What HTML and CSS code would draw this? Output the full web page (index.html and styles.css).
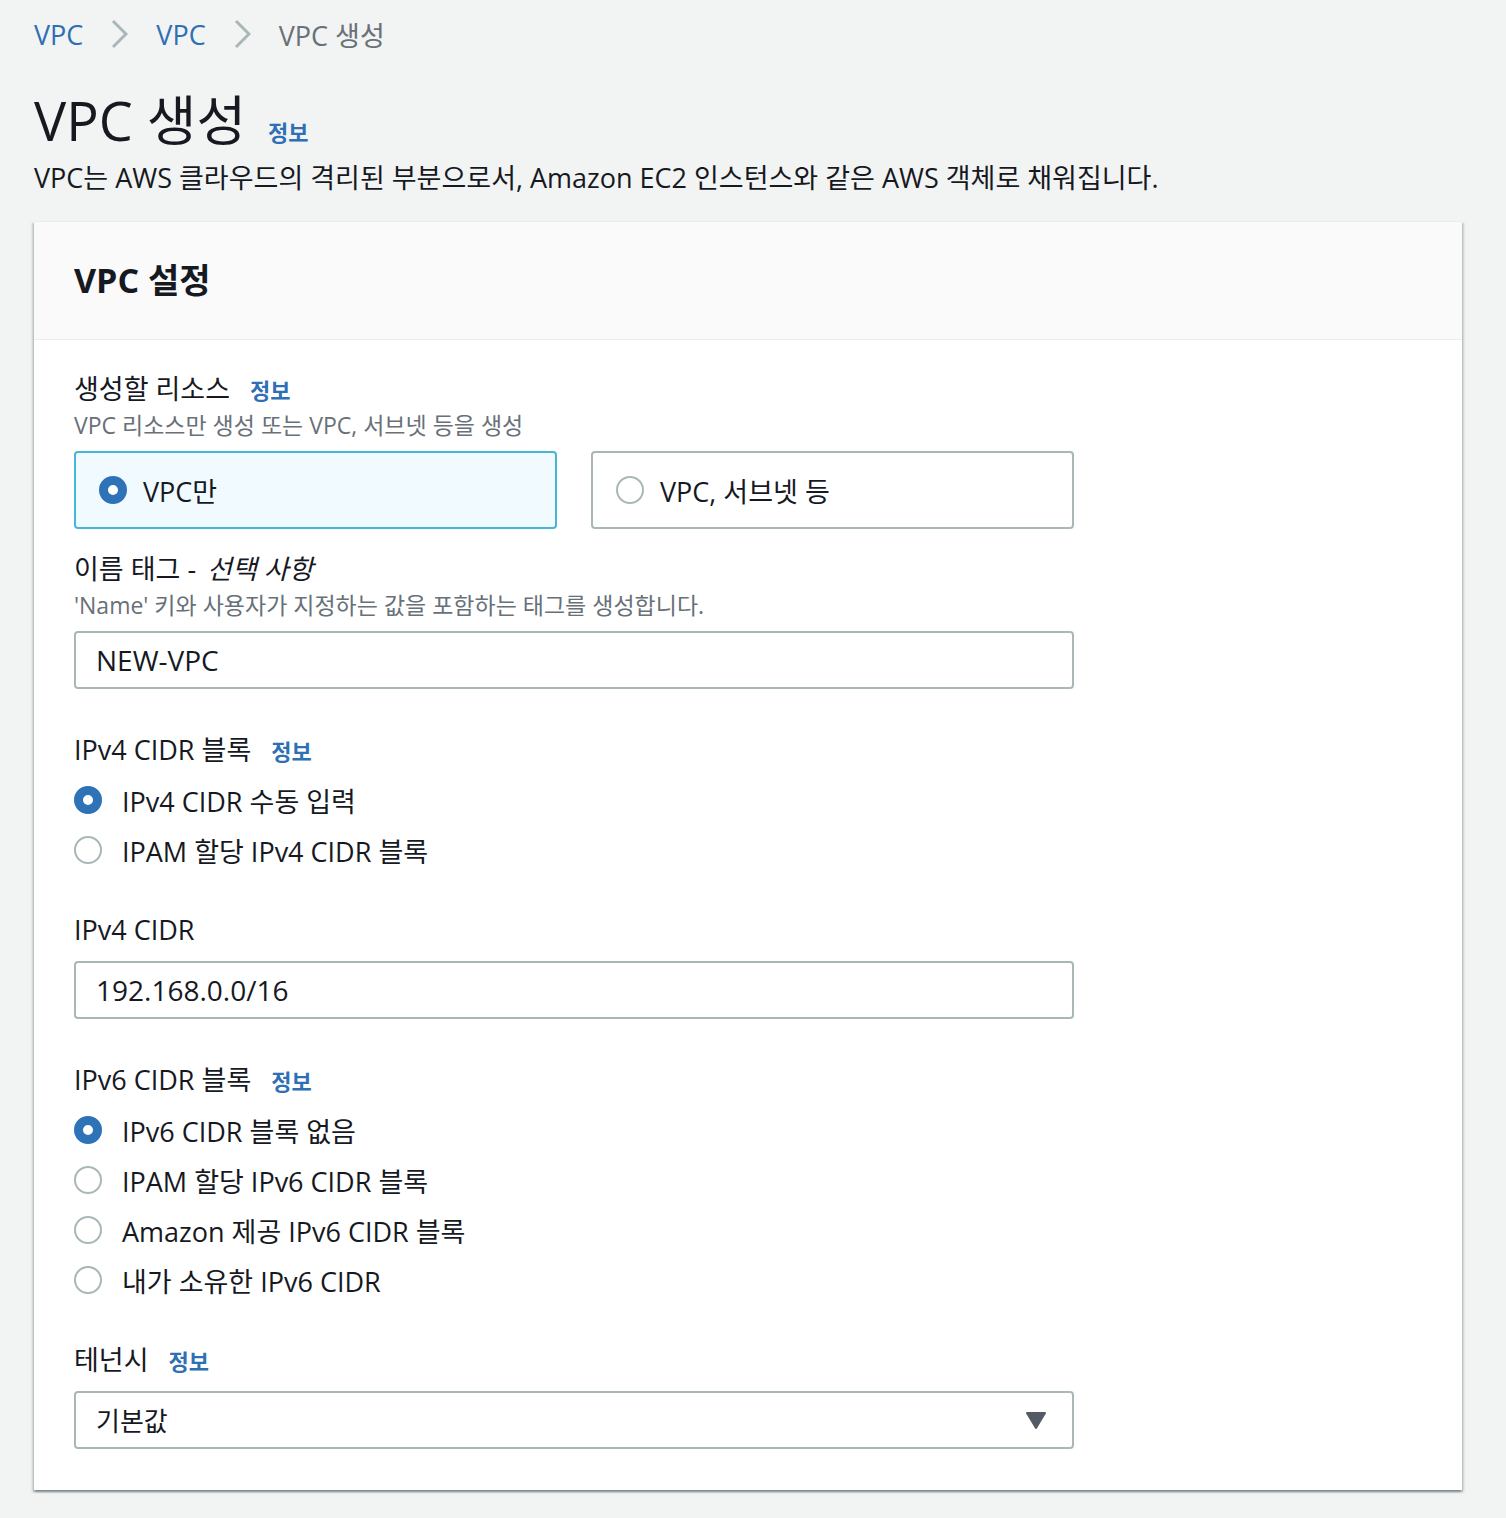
FILE: index.html
```html
<!DOCTYPE html>
<html lang="ko">
<head>
  <meta charset="UTF-8">
  <meta name="viewport" content="width=device-width, initial-scale=1.0">
  <title>VPC 생성</title>
  <link rel="stylesheet" href="styles.css">
</head>
<body>
  <nav class="breadcrumbs">
    <a href="#">VPC</a>
    <span class="crumb-sep"><svg width="17" height="30" viewBox="0 0 17 30"><polyline points="2,2 15,15 2,28" fill="none" stroke="#aab7b8" stroke-width="3"/></svg></span>
    <a href="#">VPC</a>
    <span class="crumb-sep"><svg width="17" height="30" viewBox="0 0 17 30"><polyline points="2,2 15,15 2,28" fill="none" stroke="#aab7b8" stroke-width="3"/></svg></span>
    <span class="crumb-current">VPC 생성</span>
  </nav>

  <h1 class="page-title">VPC 생성 <a class="info-link" href="#">정보</a></h1>
  <p class="page-desc">VPC는 AWS 클라우드의 격리된 부분으로서, Amazon EC2 인스턴스와 같은 AWS 객체로 채워집니다.</p>

  <div class="panel">
    <div class="panel-header">
      <h2>VPC 설정</h2>
    </div>
    <div class="panel-body">

      <div class="field">
        <div class="field-label">생성할 리소스 <a class="info-link" href="#">정보</a></div>
        <div class="field-desc">VPC 리소스만 생성 또는 VPC, 서브넷 등을 생성</div>
        <div class="tiles">
          <div class="tile selected"><span class="radio checked"></span>VPC만</div>
          <div class="tile"><span class="radio"></span>VPC, 서브넷 등</div>
        </div>
      </div>

      <div class="field field-tight">
        <div class="field-label">이름 태그 - <em>선택 사항</em></div>
        <div class="field-desc">'Name' 키와 사용자가 지정하는 값을 포함하는 태그를 생성합니다.</div>
        <div class="input">NEW-VPC</div>
      </div>

      <div class="field">
        <div class="field-label">IPv4 CIDR 블록 <a class="info-link" href="#">정보</a></div>
        <div class="radio-list">
          <div class="radio-row"><span class="radio checked"></span>IPv4 CIDR 수동 입력</div>
          <div class="radio-row"><span class="radio"></span>IPAM 할당 IPv4 CIDR 블록</div>
        </div>
      </div>

      <div class="field field-after-radios">
        <div class="field-label">IPv4 CIDR</div>
        <div class="input input-spaced">192.168.0.0/16</div>
      </div>

      <div class="field">
        <div class="field-label">IPv6 CIDR 블록 <a class="info-link" href="#">정보</a></div>
        <div class="radio-list">
          <div class="radio-row"><span class="radio checked"></span>IPv6 CIDR 블록 없음</div>
          <div class="radio-row"><span class="radio"></span>IPAM 할당 IPv6 CIDR 블록</div>
          <div class="radio-row"><span class="radio"></span>Amazon 제공 IPv6 CIDR 블록</div>
          <div class="radio-row"><span class="radio"></span>내가 소유한 IPv6 CIDR</div>
        </div>
      </div>

      <div class="field field-after-radios">
        <div class="field-label">테넌시 <a class="info-link" href="#">정보</a></div>
        <div class="input input-spaced select">
          <span>기본값</span>
          <svg class="caret" width="20" height="17" viewBox="0 0 20 17"><path d="M1 1 H19 L10 16 Z" fill="#545b64" stroke="#545b64" stroke-width="2" stroke-linejoin="round"/></svg>
        </div>
      </div>

    </div>
  </div>
</body>
</html>
```

FILE: styles.css
```css
* {
  box-sizing: border-box;
}
body {
  margin: 0;
  padding: 0 44px 28px 34px;
  background: #f2f3f3;
  font-family: "Open Sans", "Noto Sans CJK KR", sans-serif;
  color: #16191f;
}
a {
  text-decoration: none;
}

/* breadcrumbs */
.breadcrumbs {
  display: flex;
  align-items: center;
  height: 68px;
  font-size: 27px;
}
.breadcrumbs a {
  color: #2e6fb5;
}
.crumb-sep {
  display: flex;
  margin: 0 28px;
}
.crumb-current {
  color: #687078;
}

/* page heading */
.page-title {
  display: flex;
  align-items: baseline;
  gap: 22px;
  height: 64px;
  margin: 20px 0 0;
  font-size: 54px;
  font-weight: 400;
  line-height: 64px;
}
.info-link {
  font-size: 22px;
  font-weight: 700;
  line-height: 1;
  color: #2e6fb5;
}
.page-desc {
  margin: 8px 0 0;
  font-size: 27px;
  line-height: 36px;
}

/* panel */
.panel {
  margin-top: 25px;
  background: #fff;
  border-top: 1px solid #eaeded;
  box-shadow: 0 2px 2px 0 rgba(0,28,36,0.3), 2px 2px 2px 0 rgba(0,28,36,0.15), -2px 2px 2px 0 rgba(0,28,36,0.15);
}
.panel-header {
  background: #fafafa;
  border-bottom: 1px solid #eaeded;
  padding: 36px 40px 37px;
}
.panel-header h2 {
  margin: 0;
  font-size: 34px;
  font-weight: 700;
  line-height: 44px;
}
.panel-body {
  padding: 31px 40px 41px;
}

/* form fields */
.field {
  margin-top: 43px;
}
.field:first-child {
  margin-top: 0;
}
.field-tight {
  margin-top: 22px;
}
.field-after-radios {
  margin-top: 37px;
}
.field-label {
  display: flex;
  align-items: baseline;
  gap: 20px;
  height: 36px;
  font-size: 27px;
  line-height: 36px;
}
.field-label em {
  margin-left: -9px;
}
.field-desc {
  margin-top: 2px;
  font-size: 23px;
  line-height: 32px;
  color: #687078;
}

/* tiles */
.tiles {
  display: flex;
  gap: 34px;
  width: 1000px;
  margin-top: 10px;
}
.tile {
  flex: 1;
  display: flex;
  align-items: center;
  gap: 16px;
  height: 78px;
  padding-left: 23px;
  border: 2px solid #aab7b8;
  border-radius: 4px;
  font-size: 27px;
}
.tile.selected {
  border-color: #44b9d6;
  background: #f1faff;
}

/* radios */
.radio {
  flex: none;
  width: 28px;
  height: 28px;
  border-radius: 50%;
  border: 2px solid #aab7b8;
  background: #fff;
}
.radio.checked {
  border: 9px solid #2e72b8;
}
.radio-list {
  margin-top: 7px;
}
.radio-row {
  display: flex;
  align-items: center;
  gap: 20px;
  height: 50px;
  font-size: 27px;
}

/* inputs */
.input {
  display: flex;
  align-items: center;
  width: 1000px;
  height: 58px;
  margin-top: 10px;
  padding: 0 26px 0 20px;
  border: 2px solid #aab7b8;
  border-radius: 4px;
  font-size: 28px;
}
.input-spaced {
  margin-top: 13px;
}
.select {
  justify-content: space-between;
  font-size: 26px;
}
```
